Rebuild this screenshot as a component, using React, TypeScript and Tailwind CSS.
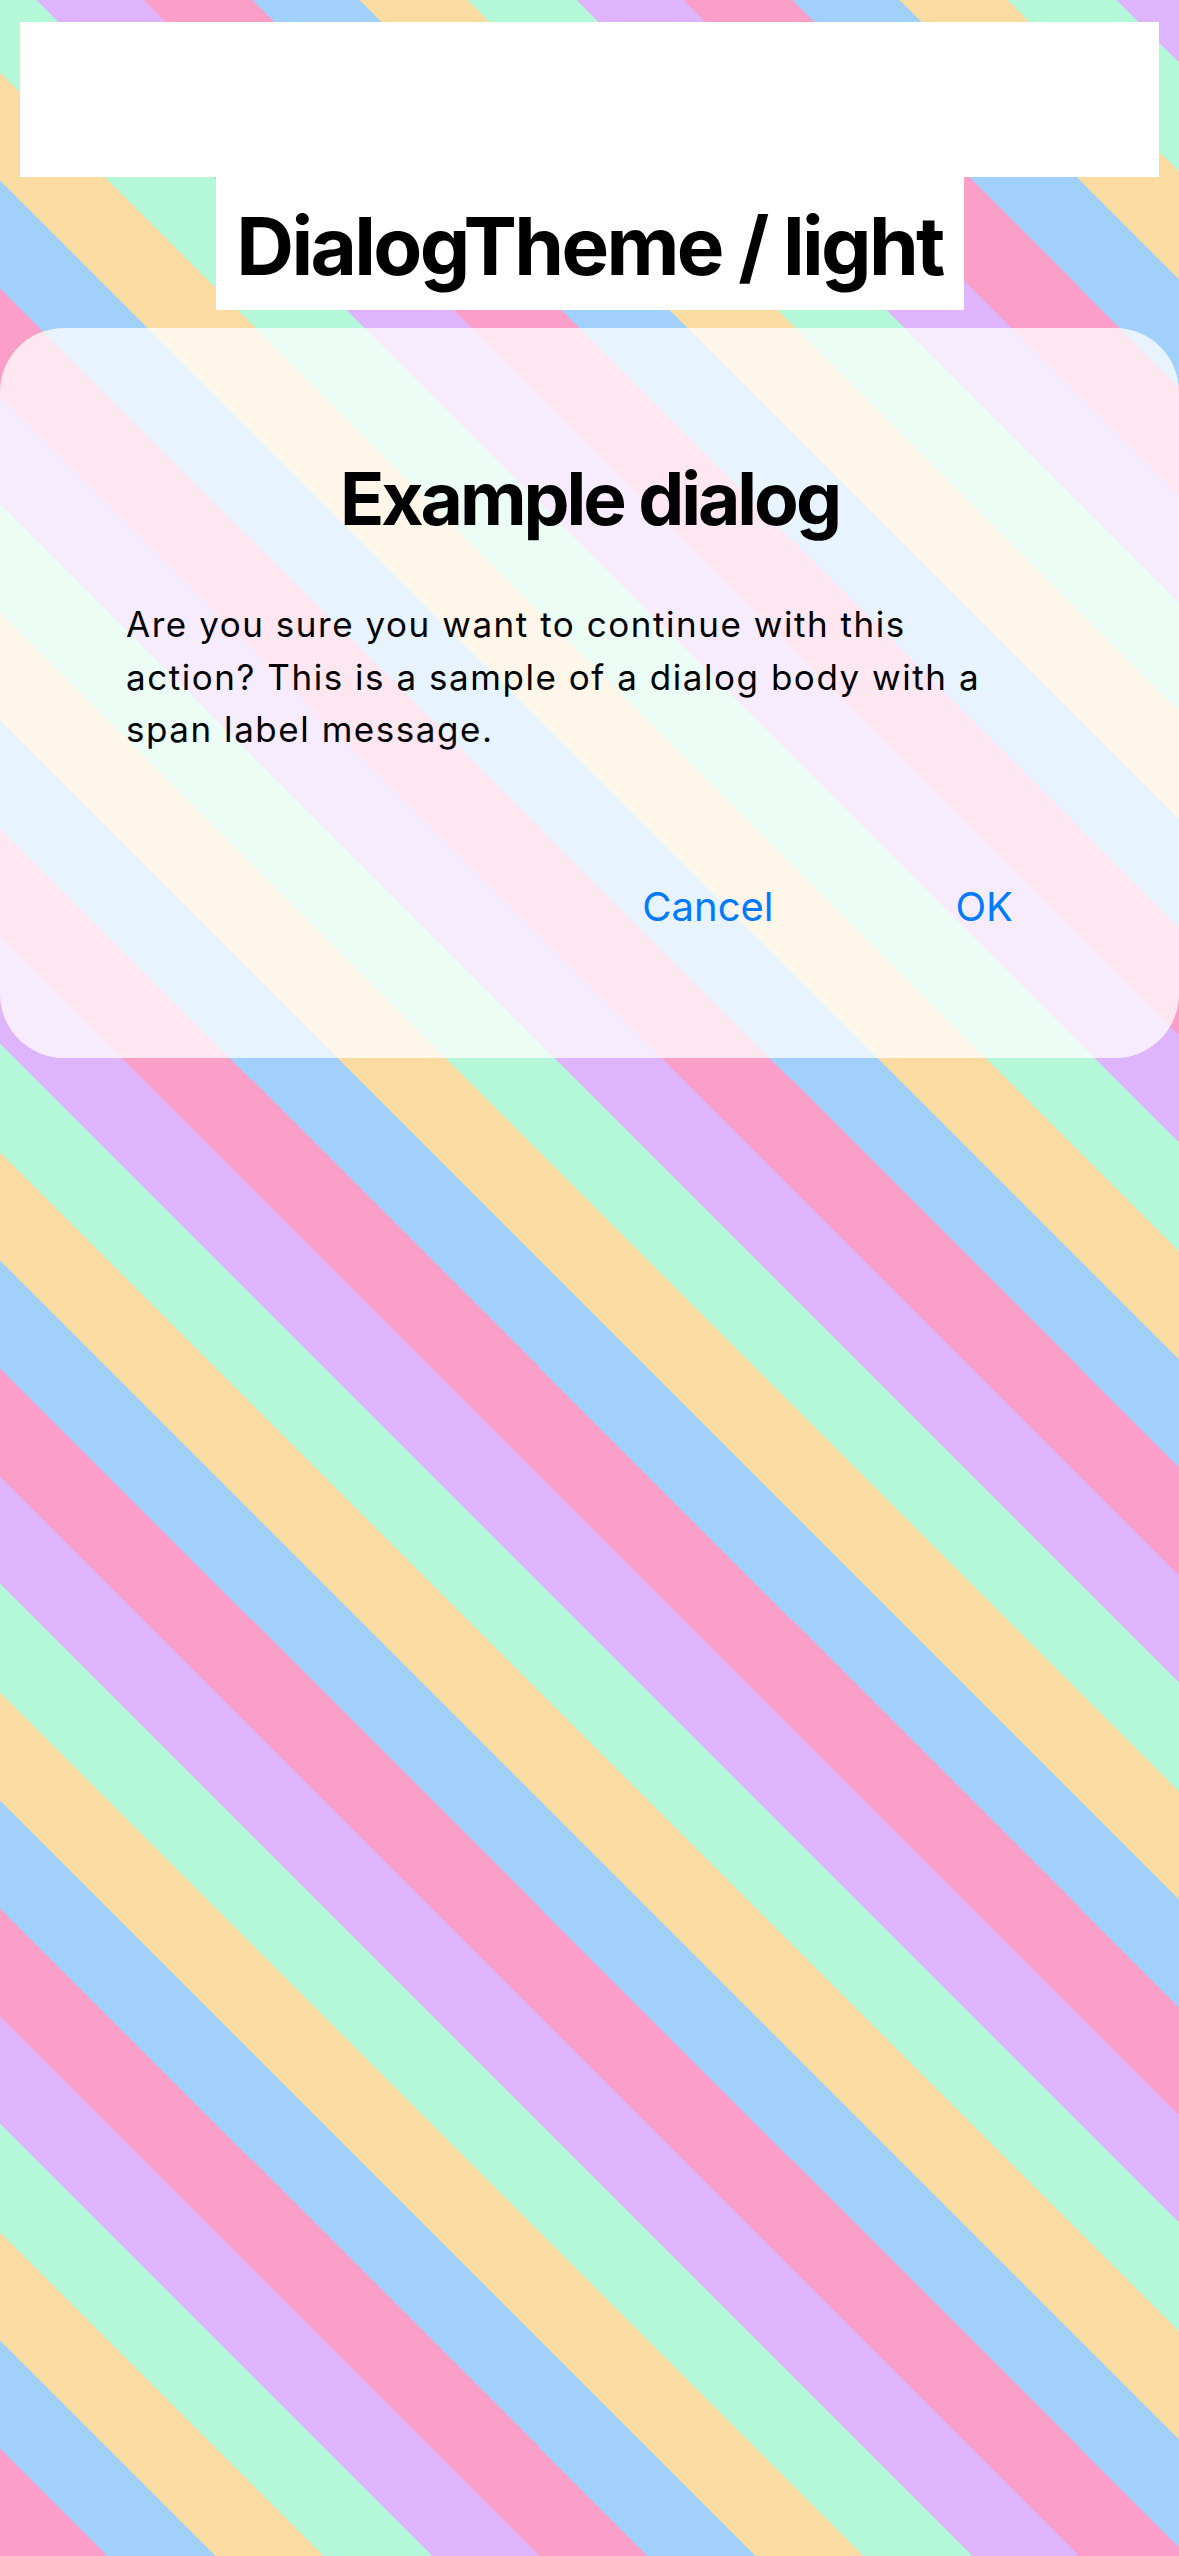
export default function App() {
  return (
    <div className="flex min-h-[2556px] w-full flex-col font-[Inter,sans-serif] bg-[repeating-linear-gradient(45deg,#B4F7D9_0px,#B4F7D9_25.46px,#DEB4FC_25.46px,#DEB4FC_101.82px,#FC9FC8_101.82px,#FC9FC8_178.19px,#A0D0FB_178.19px,#A0D0FB_254.55px,#FADBA2_254.55px,#FADBA2_330.92px,#B4F7D9_330.92px,#B4F7D9_381.84px)] bg-size-[540px_540px]">
      <div className="mx-[20px] mt-[22px] h-[155px] bg-white" />
      <div className="flex h-[133px] w-[748px] items-start justify-center self-center bg-white pt-[20px]">
        <span className="whitespace-nowrap text-[80px] font-bold leading-[97px] tracking-[-0.033em] text-black">DialogTheme / light</span>
      </div>
      <div className="mt-[18px] flex flex-col rounded-[64px] bg-white/75 pb-[127px] pt-[127px]">
        <h1 className="whitespace-nowrap text-center text-[73px] font-bold leading-[88px] tracking-[-0.041em] text-black">Example dialog</h1>
        <p className="mt-[55px] whitespace-nowrap pl-[126px] text-[35px] leading-[52.5px] tracking-[0.044em] text-black">
          Are you sure you want to continue with this
          <br />
          action? This is a sample of a dialog body with a
          <br />
          span label message.
        </p>
        <div className="mt-[127.5px] flex justify-end gap-[182px] pr-[166px]">
          <button className="text-[40px] leading-[48px] text-[#007AFF]">Cancel</button>
          <button className="text-[40px] leading-[48px] text-[#007AFF]">OK</button>
        </div>
      </div>
    </div>
  );
}
